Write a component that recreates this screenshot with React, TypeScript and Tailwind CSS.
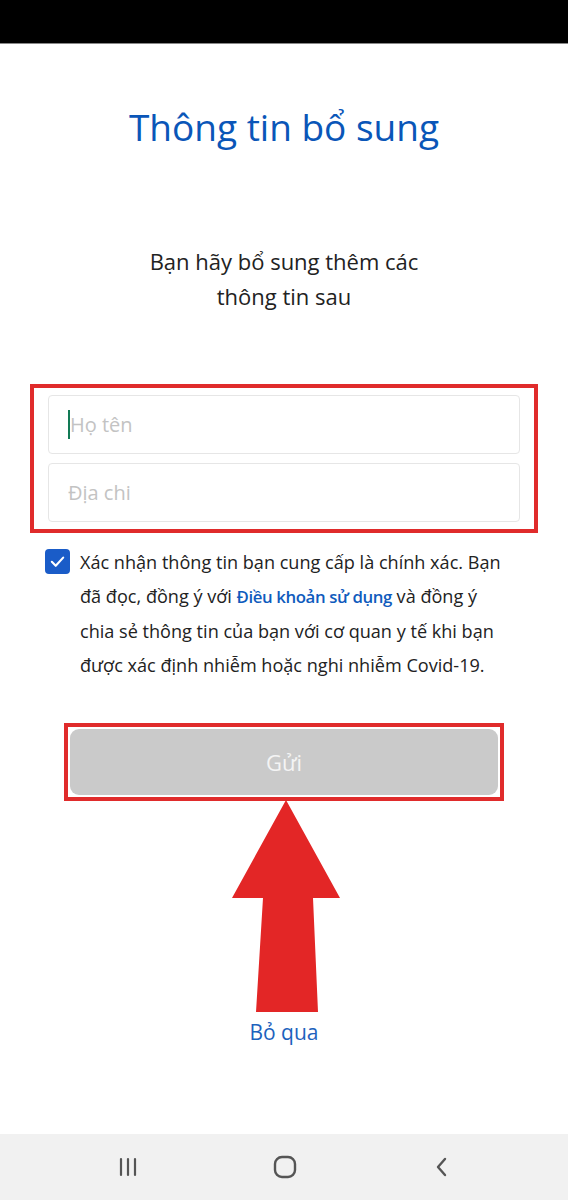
import React from "react";

const UpArrow = () => (
  <svg
    className="pointer-events-none absolute left-[226px] top-[796px]"
    width="120"
    height="220"
    viewBox="0 0 120 220"
  >
    <polygon
      points="60,4 114,102 87,102 92,216 30,216 37,102 6,102"
      fill="#e32626"
    />
  </svg>
);

const NavBar = () => (
  <div className="flex h-[66px] w-full items-center justify-around bg-[#f1f1f1] px-[60px]">
    <svg width="24" height="24" viewBox="0 0 24 24" className="ml-[-10px]">
      <g stroke="#555" strokeWidth="2.2" strokeLinecap="round">
        <line x1="5" y1="4" x2="5" y2="20" />
        <line x1="12" y1="4" x2="12" y2="20" />
        <line x1="19" y1="4" x2="19" y2="20" />
      </g>
    </svg>
    <svg width="26" height="26" viewBox="0 0 26 26">
      <rect x="3" y="3" width="20" height="20" rx="7" fill="none" stroke="#555" strokeWidth="2.4" />
    </svg>
    <svg width="24" height="24" viewBox="0 0 24 24" className="mr-[-12px]">
      <polyline points="15,4 8,12 15,20" fill="none" stroke="#555" strokeWidth="2.4" strokeLinecap="round" strokeLinejoin="round" />
    </svg>
  </div>
);

const App = () => {
  return (
    <div
      className="relative flex h-[1200px] w-[568px] flex-col overflow-hidden bg-white"
      style={{ fontFamily: '"Open Sans", "Noto Sans", sans-serif' }}
    >
      <div className="h-[44px] w-full border-b border-[#888] bg-black" />

      <h1 className="mt-[58px] text-center text-[37px] leading-[50px] text-[#0a56b8]">
        Thông tin bổ sung
      </h1>

      <p className="mt-[92px] text-center text-[22px] leading-[35px] text-[#222]">
        Bạn hãy bổ sung thêm các
        <br />
        thông tin sau
      </p>

      {/* input group */}
      <div className="mx-[30px] mt-[70px] flex flex-col gap-[9px] border-4 border-[#e02b2b] px-[14px] py-[7px]">
        <div className="flex h-[59px] items-center rounded-[4px] border border-[#e6e6e6] px-[19px]">
          <span className="h-[29px] w-[2px] bg-[#127a55]" />
          <span className="text-[20px] text-[#c3c3c3]">Họ tên</span>
        </div>
        <div className="flex h-[59px] items-center rounded-[4px] border border-[#e6e6e6] px-[19px]">
          <span className="text-[20px] text-[#c3c3c3]">Địa chi</span>
        </div>
      </div>

      {/* consent */}
      <div className="ml-[45px] mr-[30px] mt-[12px] flex gap-[10px]">
        <div className="mt-[4px] flex h-[25px] w-[25px] shrink-0 items-center justify-center rounded-[4px] bg-[#1a5cc8]">
          <svg width="17" height="17" viewBox="0 0 24 24">
            <polyline points="4,12.5 9.5,18 20,6.5" fill="none" stroke="white" strokeWidth="3" strokeLinecap="round" strokeLinejoin="round" />
          </svg>
        </div>
        <p className="whitespace-nowrap text-[18.1px] leading-[34px] text-[#222]">
          Xác nhận thông tin bạn cung cấp là chính xác. Bạn
          <br />
          đã đọc, đồng ý với{" "}
          <span className="text-[16.8px] font-semibold tracking-[-0.4px] text-[#0f5bbd]">
            Điều khoản sử dụng
          </span>{" "}
          và đồng ý
          <br />
          chia sẻ thông tin của bạn với cơ quan y tế khi bạn
          <br />
          được xác định nhiễm hoặc nghi nhiễm Covid-19.
        </p>
      </div>

      {/* submit */}
      <div className="mx-[64px] mt-[41px] border-4 border-[#e02b2b] p-[2px]">
        <button className="flex h-[66px] w-full items-center justify-center rounded-[9px] bg-[#cacaca] text-[22px] text-[#f4f4f4]">
          Gửi
        </button>
      </div>

      <div className="mt-[217px] text-center text-[21px] leading-[28px] text-[#1d62bd]">
        Bỏ qua
      </div>

      <div className="flex-1" />
      <NavBar />

      <UpArrow />
    </div>
  );
};

export default App;
